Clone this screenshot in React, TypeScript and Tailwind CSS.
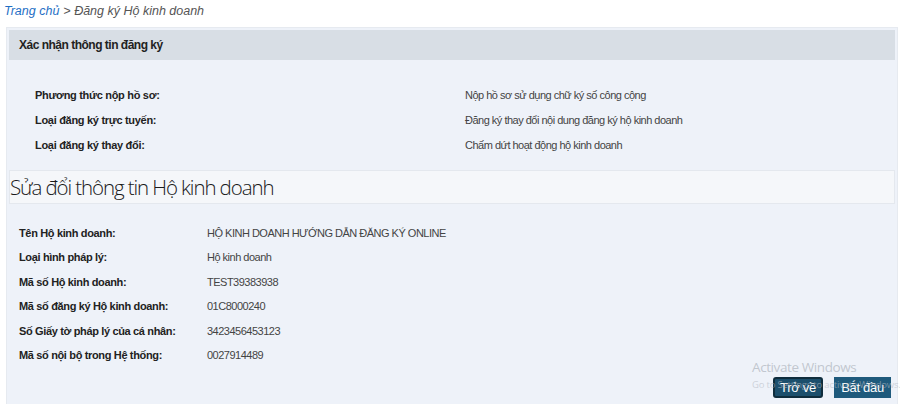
const regInfo = [
  { label: "Phương thức nộp hồ sơ:", value: "Nộp hồ sơ sử dụng chữ ký số công cộng" },
  { label: "Loại đăng ký trực tuyến:", value: "Đăng ký thay đổi nội dung đăng ký hộ kinh doanh" },
  { label: "Loại đăng ký thay đổi:", value: "Chấm dứt hoạt động hộ kinh doanh" },
];

const hkdInfo = [
  { label: "Tên Hộ kinh doanh:", value: "HỘ KINH DOANH HƯỚNG DẪN ĐĂNG KÝ ONLINE" },
  { label: "Loại hình pháp lý:", value: "Hộ kinh doanh" },
  { label: "Mã số Hộ kinh doanh:", value: "TEST39383938" },
  { label: "Mã số đăng ký Hộ kinh doanh:", value: "01C8000240" },
  { label: "Số Giấy tờ pháp lý của cá nhân:", value: "3423456453123" },
  { label: "Mã số nội bộ trong Hệ thống:", value: "0027914489" },
];

export default function App() {
  return (
    <div className="relative h-[404px] w-[900px] overflow-hidden bg-white font-['Liberation_Sans',Arial,sans-serif]">
      <div className="flex h-[23px] items-center pl-[4px] text-[12.5px] italic">
        <span className="text-[#1f6fc5]">Trang chủ</span>
        <span className="ml-1 text-[#555]">&gt; Đăng ký Hộ kinh doanh</span>
      </div>

      <div className="ml-[6px] mt-[4px] mr-[2px] h-[380px] border border-[#e6eaf0] bg-[#eef2f9] p-[2px]">
        <div className="flex h-[30px] items-center bg-[#d8dee5] pl-[10px] text-[12px] font-bold tracking-[-0.5px] text-[#222]">
          Xác nhận thông tin đăng ký
        </div>

        <div className="flex flex-col pt-[23px] pb-[12px]">
          {regInfo.map((r) => (
            <div key={r.label} className="flex h-[25px] items-center text-[11px]">
              <span className="w-[456px] pl-[26px] font-bold tracking-[-0.3px] text-[#222]">{r.label}</span>
              <span className="tracking-[-0.5px] text-[#444]">{r.value}</span>
            </div>
          ))}
        </div>

        <div className="flex h-[34px] items-center border border-[#e4e8ee] bg-[#f5f7fa] font-['Open_Sans',sans-serif] text-[20.5px] font-light tracking-[-1.1px] text-[#1a1a1a]">
          Sửa đổi thông tin Hộ kinh doanh
        </div>

        <div className="flex flex-col pt-[17px]">
          {hkdInfo.map((r) => (
            <div key={r.label} className="flex h-[24.4px] items-center text-[11px]">
              <span className="w-[198px] pl-[10px] font-bold tracking-[-0.35px] text-[#222]">{r.label}</span>
              <span className="tracking-[-0.5px] text-[#444]">{r.value}</span>
            </div>
          ))}
        </div>
      </div>

      <div className="absolute left-[773px] top-[377px] flex gap-[11px]">
        <button className="flex h-[21px] w-[50px] items-center justify-center rounded-[3px] border-2 border-[#0f2d3d] bg-[#1c4f6c] text-[13px] tracking-[-0.3px] text-white">
          Trở về
        </button>
        <button className="flex h-[21px] w-[57px] items-center justify-center bg-[#1f5a7c] text-[13px] tracking-[-0.3px] text-white">
          Bắt đầu
        </button>
      </div>

      <div className="pointer-events-none absolute left-[752px] top-[357px] whitespace-nowrap font-['Open_Sans',sans-serif] text-[13.5px] tracking-[-0.4px] text-[#b5bbc4]/80">
        Activate Windows
      </div>
      <div className="pointer-events-none absolute left-[752px] top-[378px] whitespace-nowrap font-['Open_Sans',sans-serif] text-[9.5px] tracking-[-0.2px] text-[#b5bbc4]/60">
        Go to Settings to activate Windows.
      </div>
    </div>
  );
}
